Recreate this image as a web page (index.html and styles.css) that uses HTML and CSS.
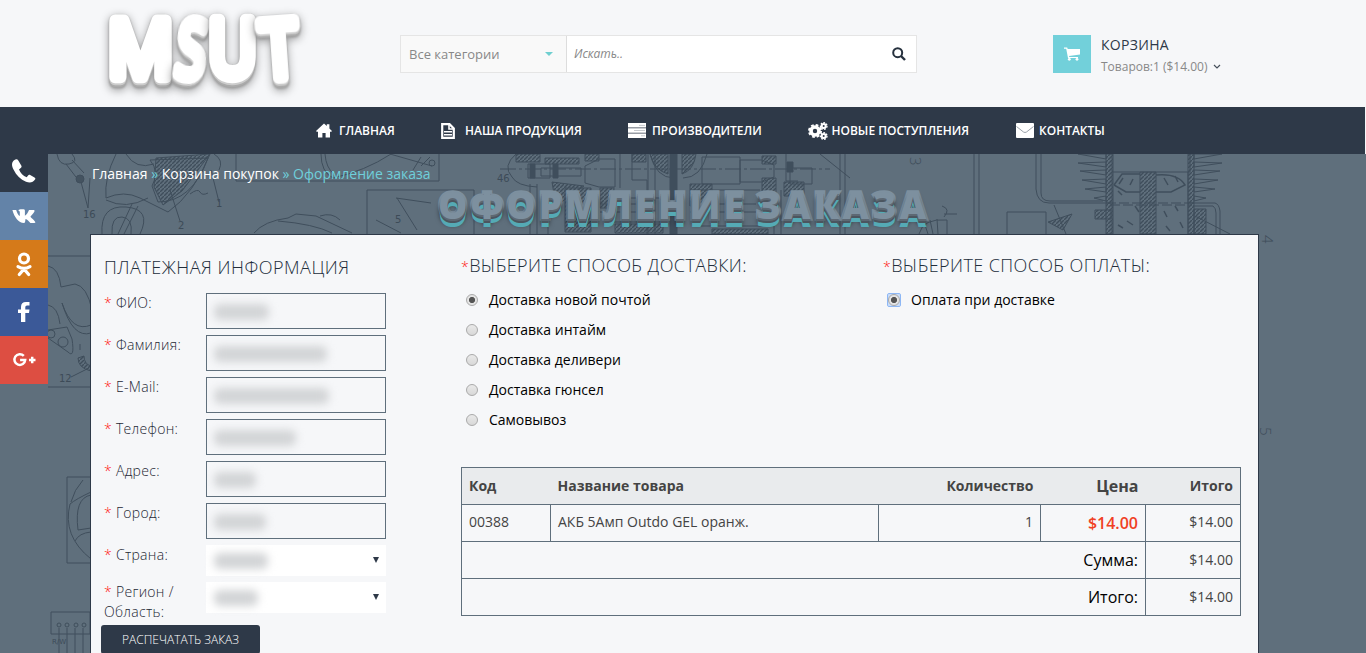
FILE: index.html
```html
<!DOCTYPE html>
<html lang="ru">
<head>
<meta charset="utf-8">
<title>Оформление заказа</title>
<link rel="stylesheet" href="styles.css">
</head>
<body>
<header class="header">
  <a class="logo">
    <svg width="214" height="107" viewBox="0 0 214 107" aria-label="MSUT">
      <g class="logo-text">
        <text x="12" y="77" textLength="65" lengthAdjust="spacingAndGlyphs">M</text>
        <text x="81" y="77" textLength="29" lengthAdjust="spacingAndGlyphs" transform="rotate(7 95 50)">S</text>
        <text x="112.500" y="76" textLength="48" lengthAdjust="spacingAndGlyphs">U</text>
        <text x="165" y="78" textLength="36" lengthAdjust="spacingAndGlyphs" transform="rotate(-4 182 50)">T</text>
      </g>
    </svg>
  </a>
  <form class="search">
    <div class="category">Все категории<i class="caret"></i></div>
    <div class="query"><em>Искать..</em>
      <svg width="14" height="14" viewBox="0 0 14 14"><circle cx="5.7" cy="5.7" r="4.5" fill="none" stroke="#26313e" stroke-width="2"/><path d="M9 9l4 4" stroke="#26313e" stroke-width="2.4"/></svg>
    </div>
  </form>
  <div class="cart">
    <span class="cart-icon"><svg width="16" height="14" viewBox="0 0 16 14"><path d="M0 .5h3.2l.5 1.5H16v5.5L5 8.9l.3 1H14v1.2H4L2.2 1.8H0z" fill="#fff"/><circle cx="5.3" cy="12.3" r="1.4" fill="#fff"/><circle cx="13" cy="12.3" r="1.4" fill="#fff"/></svg></span>
    <div><b class="cart-title">КОРЗИНА</b><span class="cart-sum">Товаров:1 ($14.00)<svg width="8" height="6" viewBox="0 0 8 6"><path d="M1 1l3 3 3-3" fill="none" stroke="#46505b" stroke-width="1.2"/></svg></span></div>
  </div>
</header>
<nav class="nav">
  <a class="n1"><svg width="16" height="15" viewBox="0 0 16 15"><path d="M0 8L8 0.5l2.8 2.6V1.3h2.6v4.3L16 8l-.7.8H14V14.5H9.6V10H6.4v4.500H2V8.800H.7z" fill="#fff"/></svg>ГЛАВНАЯ</a>
  <a class="n2"><svg width="14" height="16" viewBox="0 0 14 16"><path d="M1.200 1.200h7.300l4.300 4.300v9.300H1.200z" fill="none" stroke="#fff" stroke-width="2.200"/><path d="M8 1v5h5M3 8.700h8M3 11.700h8" fill="none" stroke="#fff" stroke-width="1.600"/></svg>НАША ПРОДУКЦИЯ</a>
  <a class="n3"><svg width="18" height="15" viewBox="0 0 18 15"><path d="M0 0h18v4.500H0zM0 5.200h18v4.500H0zM0 10.400h18V15H0z" fill="#fff"/><path d="M11 2.400h6M6 7.500h11M13 12.800h4" stroke="#b9bec4" stroke-width=".8"/></svg>ПРОИЗВОДИТЕЛИ</a>
  <a class="n4"><svg width="20" height="18" viewBox="0 0 20 18" fill="none" stroke="#fff"><circle cx="7" cy="9" r="4" stroke-width="3.600"/><circle cx="7" cy="9" r="6" stroke-width="2" stroke-dasharray="2.700 2.010"/><circle cx="15.700" cy="4" r="2" stroke-width="2"/><circle cx="15.700" cy="4" r="3.300" stroke-width="1.300" stroke-dasharray="1.700 1.260"/><circle cx="15.700" cy="14" r="2" stroke-width="2"/><circle cx="15.700" cy="14" r="3.300" stroke-width="1.300" stroke-dasharray="1.700 1.260"/></svg>НОВЫЕ ПОСТУПЛЕНИЯ</a>
  <a class="n5"><svg width="18" height="15" viewBox="0 0 18 15"><rect width="18" height="15" rx="1" fill="#fff"/><path d="M.5 3.500L7.500 9Q9 10 10.500 9L17.500 3.500" fill="none" stroke="#8e969f" stroke-width=".9"/></svg>КОНТАКТЫ</a>
</nav>
<main class="stage">
  <svg class="backdrop" width="1366" height="499" viewBox="0 154 1366 499">
    <defs>
      <pattern id="hatch" width="4" height="4" patternUnits="userSpaceOnUse"><path d="M-1 5L5-1" stroke="#34424f" stroke-width="1.400"/></pattern>
      <g id="fins"><path d="M1106 154h-28l28 5zM1106 162l-28 1 28 4zM1106 170l-26 1 26 4zM1106 179l-24 1 24 4zM1106 187l-21 2 21 3zM1106 196l-12 2 12 3z"/></g>
    </defs>
    <g class="lines">
      <!-- scooter parts, left -->
      <path d="M57 154q2 12 12 10t3-10M66 164l13 17M72 160l12 13M88 208l2-30M88 208l-7-26M236 154v27h203v-27M48 256h43"/>
      <ellipse cx="80" cy="179" rx="4" ry="4" fill="#3b4956"/>
      <path d="M116 154q-12 24-10 44 18-8 34 0l28 14q26-18 42-58M150 160q10 12 2 26l6 16q34 0 50-44zM102 234q-2-29 24-27t14 27M112 234q-1-18 10-17t9 17M106 200q20 10 42-2M118 234l14-30M124 234l14-28M126 154q10 16 28 10M170 190l10 31M211 170l8 32M190 194q8-6 10-2t8 1M214 154q10 6 5 16"/>
      <path d="M156 158l54-4-28 37-19 14-9-18z" fill="url(#hatch)"/>
      <path d="M321 154q0 18 12 24 32-7 58-24M325 154q1 14 9 20M390 154l42 12M421 166l9-9M413 170l8-13" />
      <circle cx="432" cy="163" r="3"/>
      <path d="M254 233q10-12 34-15l8-4 20 2 36 17M278 221q36 3 54 12M320 216q12-4 20 4M367 234v-44h107v44M397 198l20 32M376 220l25 13M396 198l35 5"/>
      <!-- engine block behind the page title -->
      <path d="M516 154q-14 12-4 23 5 9 25 10M528 164h22v14h-22zM541 168h40v8h-40zM585 166l14-7h16v28h-16l-14-4zM632 154v26h15v54M648 154v80M675 154v80M650 154q6 24 24 24M683 178q18 0 24-24M702 157v27h38v-27zM740 160h22l12 5v12l-12 5h-22zM790 168h22v16h-22zM786 154v27h12M530 184v50M537 184v50M548 218v16M610 198h52v24h-52zM620 154v34M820 154l30 24M845 154v80M840 154v80M655 154v80M690 190h70M700 226h74M600 204h46M600 212h46M690 204h66M690 212h66M774 200v34M781 190v44"/>
      <path d="M516 154h24v8h-24zM545 158h34v6h-34zM585 154h14v7h-14zM632 154h14v8h-14zM552 182l32 4-28 20zM565 188h26v44h-26zM650 154h18v20q-14-4-18-20zM682 174q12-4 14-20h-14zM690 184h22v22h-22zM762 156h14v8h-14zM762 178h14v20h-14zM615 224h48v9h-48zM712 229h56v5h-56zM600 188h14v20h-14zM784 182h20v14h-20z" fill="url(#hatch)"/>
      <path d="M670 154h7v80h-7zM787 162h6v10h-6zM530 164h5v14h-5zM553 164h5v14h-5z" fill="#344250"/>
      <path d="M500 169h330" stroke-dasharray="16 3 3 3"/>
      <!-- pipes and finned cylinder, right -->
      <path d="M974 154v80M979 154v80M1036 154v35q1 14 13 14h62M1041 154v39q0 8 9 8h53M1054 205l12 29M1007 234v-22h39v22M942 206q9 3 2 11M944 214h13M919 234q4-16 28-14v14M924 222l4 12M930 220l3 14M937 219l1 15M1112 154v18h78v-18M1112 172v62M1188 172v62"/>
      <path d="M1106 154h7v80h-7zM1140 172h16v62h-16zM1188 154h6v80h-6zM1048 222l24-8-9 16zM1095 210h16v9h-16zM1194 209h12v25h-12z" fill="url(#hatch)"/>
      <use href="#fins"/><use href="#fins" transform="translate(2300) scale(-1 1)"/>
      <path d="M1114 185l8-11h18M1114 185l12 7h14M1156 175q22-2 29 10l-14 7h-15M1119 184l4-6M1130 185l3-6M1168 185l-4-7M1178 182l-3-6M1118 191l4 4M1135 206l4 6M1118 225l5 3M1127 221l6 4M1164 211l3 6M1175 206l3 5M1166 226l4 5M1180 222l3 6" stroke-width="1.500"/>
      <path d="M1106 203h88M1110 205h82" stroke-dasharray="10 3"/>
      <path d="M1190 203h25q4 1 5 8v23M1193 206h20q3 2 3 7v21M1195 216l35 18"/>
      <!-- fairing beside the social buttons -->
      <path d="M48 266q11 2 13 21l14-3q12 2 17 26M48 305q10 2 12 19M91 333q-18 6-29-30 10 30 29 22M48 330l19-3 5 12q3 20-4 13L48 338M48 387h43M71 377l18-9M80 344v6"/>
      <circle cx="63" cy="342" r="5"/><circle cx="51" cy="334" r="4"/>
      <path d="M78 358l6-2q0 8 7 10v5q-13-3-13-13z" fill="url(#hatch)"/>
      <path d="M91 477H67v86h24M91 492q-15 7-21 12-8 32 21 55M83 480q-9 10-12 22M91 495q-17 3-13 35l13-2M91 532q-12 1-16 9M51 612h39v22H51zM59 628v25M67 628v25M75 628v25M83 628v25"/>
      <g><circle cx="59" cy="625" r="2"/><circle cx="67" cy="625" r="2"/><circle cx="76" cy="625" r="2"/><circle cx="84" cy="625" r="2"/></g>
    </g>
    <g class="marks"><text x="83" y="218">16</text><text x="178" y="229">2</text><text x="216" y="207">1</text><text x="395" y="223">5</text><text x="59" y="382">12</text><text x="497" y="182">46</text><text class="tiny" x="52" y="644">R/W</text><text class="far" x="910" y="167" transform="rotate(90 915 162)">3</text><text class="far" x="1262" y="245" transform="rotate(90 1267 240)">4</text><text class="far" x="1260" y="437" transform="rotate(90 1265 432)">5</text></g>
  </svg>
  <div class="content">
    <div class="crumbs">Главная <i>»</i> Корзина покупок <i>» Оформление заказа</i></div>
    <h1 class="title">ОФОРМЛЕНИЕ ЗАКАЗА</h1>
    <section class="panel">
      <div class="billing">
        <h2>ПЛАТЕЖНАЯ ИНФОРМАЦИЯ</h2>
        <div class="row"><label><s>*</s> ФИО:</label><div class="field"><i class="smudge w55"></i></div></div>
        <div class="row"><label><s>*</s> Фамилия:</label><div class="field"><i class="smudge w113"></i></div></div>
        <div class="row"><label><s>*</s> E-Mail:</label><div class="field"><i class="smudge w115"></i></div></div>
        <div class="row"><label><s>*</s> Телефон:</label><div class="field"><i class="smudge w82"></i></div></div>
        <div class="row"><label><s>*</s> Адрес:</label><div class="field"><i class="smudge w42"></i></div></div>
        <div class="row"><label><s>*</s> Город:</label><div class="field"><i class="smudge w52"></i></div></div>
        <div class="row short"><label><s>*</s> Страна:</label><div class="field select"><i class="smudge w54"></i><i class="arrow"></i></div></div>
        <div class="row last"><label><s>*</s> Регион / Область:</label><div class="field select"><i class="smudge w44"></i><i class="arrow"></i></div></div>
        <button class="print" type="button">РАСПЕЧАТАТЬ ЗАКАЗ</button>
      </div>
      <div class="order">
        <div class="methods">
          <div class="shipping">
            <h2><s>*</s>ВЫБЕРИТЕ СПОСОБ ДОСТАВКИ:</h2>
            <label class="option"><i class="radio on"></i>Доставка новой почтой</label>
            <label class="option"><i class="radio"></i>Доставка интайм</label>
            <label class="option"><i class="radio"></i>Доставка деливери</label>
            <label class="option"><i class="radio"></i>Доставка гюнсел</label>
            <label class="option"><i class="radio"></i>Самовывоз</label>
          </div>
          <div class="payment">
            <h2><s>*</s>ВЫБЕРИТЕ СПОСОБ ОПЛАТЫ:</h2>
            <label class="option"><span class="focus"><i class="radio on"></i></span>Оплата при доставке</label>
          </div>
        </div>
        <table class="items">
          <colgroup><col class="c1"><col class="c2"><col class="c3"><col class="c4"><col class="c5"></colgroup>
          <thead><tr><th>Код</th><th>Название товара</th><th class="r">Количество</th><th class="r big">Цена</th><th class="r">Итого</th></tr></thead>
          <tbody>
            <tr class="product"><td>00388</td><td>АКБ 5Амп Outdo GEL оранж.</td><td class="r">1</td><td class="r price">$14.00</td><td class="r">$14.00</td></tr>
            <tr><td colspan="4" class="r total">Сумма:</td><td class="r">$14.00</td></tr>
            <tr><td colspan="4" class="r total">Итого:</td><td class="r">$14.00</td></tr>
          </tbody>
        </table>
      </div>
    </section>
  </div>
</main>
<aside class="social">
  <a class="phone"><svg width="26" height="26" viewBox="0 0 26 26"><path d="M3.500 2C.5 4 .4 7.500 2.500 11.500c3 6 7 10 12.500 12.300 4 1.600 7 .8 9-2.200.7-1 .4-1.700-.5-2.200l-4.300-2.300c-.9-.5-1.700-.2-2.300.6l-1.200 1.600c-3.700-1.500-6.200-4-7.700-7.700L9.700 10c.9-.6 1.100-1.300.7-2.200L7.300 2.500C6.500 1.200 5 .9 3.500 2z" fill="#fff"/></svg></a>
  <a class="vk"><svg width="24" height="14" viewBox="0 0 24 14"><path d="M.4 1h3.800c.8 3 2 5.300 3.600 6V3.100C7.700 2 7 1.700 6.300 1.500 7 .5 8.200.3 9.500.3h2.200c1 .1 1.200.6 1.200 1.600v4.900C14.600 5.800 16 3.500 17 1h4.300c1.200 0 1.600.5 1 1.700-.8 1.700-2.800 3.500-3.900 5 1.300 1.500 3.300 3 4.700 5 .5.800.1 1.200-.7 1.200h-4c-1.500-1.400-3.200-3.500-4.800-3.800-.5 1 0 3.800-1.400 3.800C6.500 14 2.500 8.500.4 1z" fill="#fff"/></svg></a>
  <a class="ok"><svg width="16" height="25" viewBox="0 0 16 25" fill="none" stroke="#fff" stroke-width="3.200" stroke-linecap="round"><circle cx="8" cy="6.500" r="4.500"/><path d="M2 14.600q6 3.600 12 0M8 17l-4.700 5.500M8 17l4.700 5.500"/></svg></a>
  <a class="fb"><svg width="12" height="20" viewBox="0 0 12 20"><path d="M3 20v-9H0V7.500h3V5Q3 0 8 0h3.500v3.500H9Q7.300 3.500 7.300 5v2.500h4.200L11 11H7.300v9z" fill="#fff"/></svg></a>
  <a class="gp"><svg width="23" height="14" viewBox="0 0 23 14"><path d="M10.800 2.900A5.400 5.400 0 1 0 12.200 7H7.100M16 7h6.500M19.200 3.700v6.600" fill="none" stroke="#fff" stroke-width="2.500"/></svg></a>
</aside>
</body>
</html>
```
FILE: styles.css
```css
* { box-sizing: border-box; }
body { margin: 0; width: 1366px; height: 653px; overflow: hidden; position: relative; background: #f6f7f9; font: 14px/20px "Open Sans", sans-serif; color: #2e3948; }
i, s { font-style: normal; text-decoration: none; }
svg { display: block; flex: none; overflow: visible; }
.header { height: 107px; display: flex; align-items: flex-start; background: #f6f7f9; }
.logo { margin-left: 96px; width: 304px; height: 107px; }
.logo-text { font: 400 79px "Open Sans", sans-serif; fill: #fff; stroke: #fff; stroke-width: 12.500px; stroke-linejoin: round; stroke-linecap: round; }
.logo-text text { filter: drop-shadow(0 2px 0 #ccc) drop-shadow(0 2px 0 #aaa) drop-shadow(0 1px 1px #999) drop-shadow(0 2px 4px rgba(0,0,0,.35)); }
.search { display: flex; width: 517px; height: 38px; margin-top: 35px; border: 1px solid #e5e5e5; background: #fff; font-size: 13px; color: #888; }
.category { width: 166px; padding: 0 13px 0 8px; border-right: 1px solid #ddd; background: #f9f9f9; display: flex; justify-content: space-between; align-items: center; }
.caret { border: 4px solid transparent; border-top-color: #6fcfd0; margin-bottom: -4px; }
.query { flex: 1; display: flex; justify-content: space-between; align-items: center; padding: 0 10px 0 7px; font-size: 12px; }
.cart { display: flex; gap: 10px; margin: 35px 0 0 136px; }
.cart-icon { width: 38px; height: 38px; background: #72d0da; display: flex; align-items: center; justify-content: center; }
.cart-title { display: block; font-weight: 400; font-size: 14px; line-height: 20px; letter-spacing: .3px; }
.cart-sum { display: flex; align-items: center; gap: 5px; font-size: 12px; line-height: 23px; color: #888; white-space: nowrap; }
.nav { width: 1365px; height: 47px; background: #2e3948; display: flex; align-items: center; padding-left: 316px; color: #fff; font-weight: 600; font-size: 12px; white-space: nowrap; }
.nav a { display: flex; align-items: center; }
.n1 { width: 125px; gap: 7px; }
.n2 { width: 187px; gap: 10px; }
.n3 { width: 180px; gap: 6px; }
.n4 { width: 208px; gap: 3.500px; }
.n5 { gap: 5px; }
.stage { position: relative; height: 499px; background: #5f6f7c; overflow: hidden; }
.backdrop { position: absolute; inset: 0; }
.lines { fill: none; stroke: #344250; stroke-width: 1; opacity: .72; }
.marks { fill: #3d4b58; font: 10px "DejaVu Sans", sans-serif; }
.marks .far { font: 300 15px "Open Sans", sans-serif; }
.marks .tiny { font-size: 7px; }
.content { position: relative; width: 1169px; margin-left: 90px; }
.crumbs { height: 30px; padding: 10px 2px 0; color: #fff; }
.crumbs i { color: #6fcfdb; }
.title { margin: 0; height: 50px; padding-left: 348px; font: 800 37px/41px "Open Sans", sans-serif; letter-spacing: 2.900px; word-spacing: -3px; color: #7d909f; -webkit-text-stroke: 3.500px #7d909f; paint-order: stroke fill; white-space: nowrap; text-shadow: 0 2px 0 #5d6873, 0 4px 0 #4b555f, 0 8px 0 #55aab5, 0 6px 5px rgba(0,0,0,.6); }
.panel { height: 440px; border: 1px solid #2e3948; background: #f6f7f9; display: flex; }
h2 { margin: 0; font-weight: 300; font-size: 18px; line-height: 24px; letter-spacing: .4px; color: #222d3b; white-space: nowrap; }
s { color: #f11; }
h2 s { font-size: 14px; }
.billing { width: 370px; padding: 20px 0 0 13px; }
.billing h2 { margin-bottom: 14px; letter-spacing: .5px; }
.row { display: flex; height: 42px; }
.row label { width: 102px; font-weight: 300; letter-spacing: .3px; color: #1c2633; }
.field { width: 180px; height: 36px; border: 1px solid #5f6f7c; padding: 10px 7px; }
.select { height: 31px; border: 0; background: #fff; display: flex; justify-content: space-between; padding: 8px 7px 0 8px; }
.row.short { height: 37px; }
.row.last { height: 43px; }
.smudge { display: block; height: 16px; border-radius: 6px; background: #d2d4d6; filter: blur(4px); }
.w55 { width: 55px; } .w113 { width: 113px; } .w115 { width: 115px; } .w82 { width: 82px; }
.w42 { width: 42px; } .w52 { width: 52px; } .w54 { width: 54px; } .w44 { width: 44px; }
.arrow { width: 0; height: 0; margin-top: 4px; border: 3px solid transparent; border-top: 6px solid #2e3948; border-bottom: 0; }
.print { display: block; width: 159px; height: 29px; margin: 0 0 0 -3px; padding: 0; border: 0; border-radius: 3px; background: #2e3948; color: #fff; font: 300 12px "Open Sans", sans-serif; }
.order { width: 780px; padding-top: 18px; }
.methods { display: flex; height: 214px; }
.shipping { width: 422px; }
.methods h2 { margin-bottom: 6px; }
.option { display: flex; align-items: center; height: 30px; padding-left: 5px; gap: 11px; color: #000; }
.radio { display: block; width: 12px; height: 12px; border: 1px solid #aaa; border-radius: 50%; background: linear-gradient(#e9e9e9, #d8d8d8); }
.radio.on { background: radial-gradient(circle, #555 0 2.700px, #e4e4e4 3.500px); }
.focus { border-radius: 1px; background: #c9dcf8; outline: 1.500px solid #8db7f5; }
.items { width: 779px; table-layout: fixed; border-collapse: collapse; color: #444; }
.items th, .items td { height: 37px; padding: 0 7px; border: 1px solid #5f6f7c; text-align: left; }
.items .product td { padding-bottom: 2px; }
.items th { border-left: 0; border-right: 0; background: #e9ebed; font-weight: 700; }
.items thead { border: 1px solid #5f6f7c; }
.items .r { text-align: right; }
.items .big { font-size: 16px; }
.items .product .price { padding-bottom: 0; font-size: 16px; font-weight: 600; color: #f04023; }
.items .total { font-size: 16px; color: #000; }
.c1 { width: 89px; } .c2 { width: 328px; } .c3 { width: 162px; } .c4 { width: 105px; } .c5 { width: 95px; }
.social { position: absolute; left: 0; top: 144px; width: 48px; }
.social a { height: 48px; display: flex; align-items: center; justify-content: center; }
.phone { background: #2e3948; padding-top: 5px; } .vk { background: #6383a8; } .ok { background: #d57a1a; } .fb { background: #3b5998; } .gp { background: #dd4e42; }
```
